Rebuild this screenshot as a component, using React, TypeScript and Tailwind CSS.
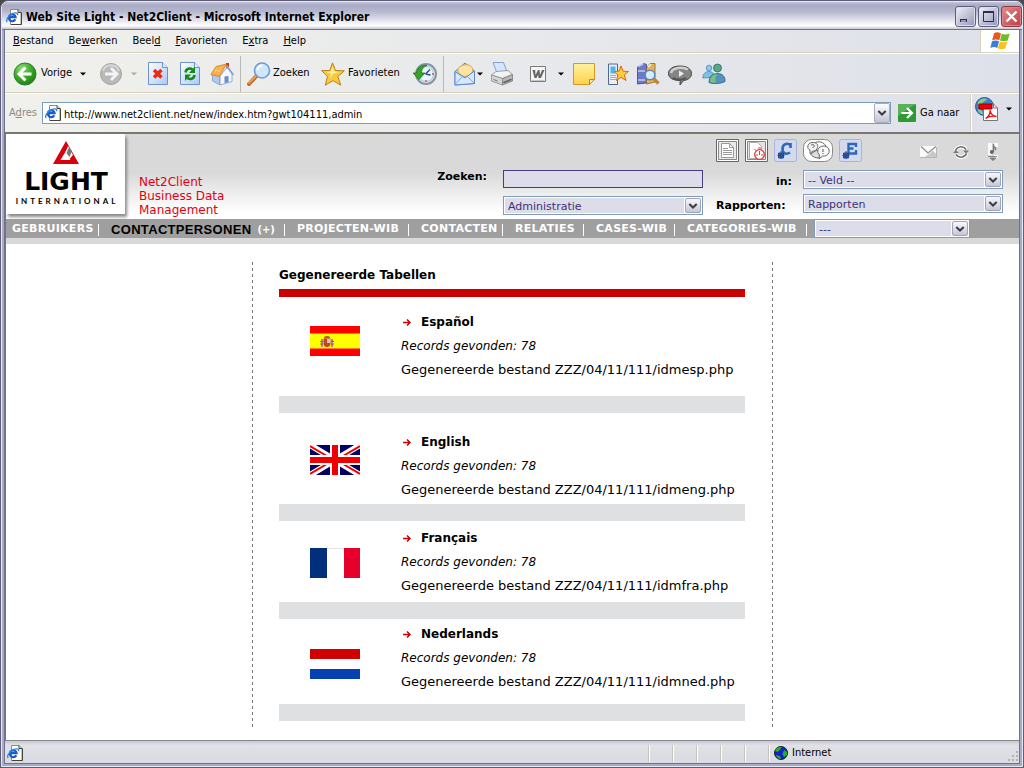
import type { ReactNode } from "react";

const ui = "font-['DejaVu_Sans_Condensed','DejaVu_Sans',sans-serif]";
const web = "font-['DejaVu_Sans',sans-serif]";

/* ---------- icons ---------- */

function IePage({ className }: { className?: string }) {
  return (
    <svg viewBox="0 0 16 16" className={className} aria-hidden="true">
      <path d="M4.500 .5h7.500l3 3v12H4.500z" fill="#fffef4" stroke="#8f8b78" />
      <path d="M12 .5v3h3M15.500 3.500v12H5" fill="none" stroke="#45423a" />
      <path d="M9.300 10.300A3.400 3.400 0 1 1 9.600 8.200H3.200" fill="none" stroke="#1b5cc8" strokeWidth="2.200" />
      <path d="M1.200 13C-1 10 5.500 2.500 11 4.200c1 .4.800 1.300.3 2" fill="none" stroke="#2f86e6" strokeWidth="1.300" />
    </svg>
  );
}

function Back() {
  return (
    <svg viewBox="0 0 24 24" className="h-6 w-6 shrink-0" aria-hidden="true">
      <defs>
        <radialGradient id="back" cx=".35" cy=".25" r=".9">
          <stop offset="0" stopColor="#8fdc7a" />
          <stop offset=".5" stopColor="#38a825" />
          <stop offset="1" stopColor="#17720f" />
        </radialGradient>
      </defs>
      <circle cx="12" cy="12" r="11" fill="url(#back)" stroke="#2c7d27" />
      <path d="M12.500 5.500 6 12l6.500 6.500M6.500 12H18.500" fill="none" stroke="#fff" strokeWidth="3" />
    </svg>
  );
}

function Forward() {
  return (
    <svg viewBox="0 0 24 24" className="h-6 w-6" aria-hidden="true">
      <circle cx="12" cy="12" r="10.500" fill="#b9b9b9" stroke="#a3a3a3" />
      <path d="M4 9a8.500 8.500 0 0 1 16 0" fill="none" stroke="#d8d8d8" strokeWidth="2" />
      <path d="M12 6l6 6-6 6M17.500 12H6" fill="none" stroke="#f4f4f4" strokeWidth="2.800" />
    </svg>
  );
}

function Caret({ color = "#000" }: { color?: string }) {
  return (
    <svg viewBox="0 0 6 4" className="h-1 w-1.5" aria-hidden="true">
      <path d="M0 .5h6L3 3.500z" fill={color} />
    </svg>
  );
}

function SheetBase({ id, children }: { id: string; children: ReactNode }) {
  return (
    <svg viewBox="0 0 20 24" className="h-6 w-5" aria-hidden="true">
      <defs>
        <linearGradient id={id} x2="1" y2="1">
          <stop offset="0" stopColor="#fff" />
          <stop offset="1" stopColor="#a9c8f7" />
        </linearGradient>
      </defs>
      <path d="M.5 .5h14l5 5v17H.500z" fill={`url(#${id})`} stroke="#6c92cf" />
      <path d="M14.500 .5v5h5" fill="#e6effd" stroke="#6c92cf" />
      {children}
    </svg>
  );
}

function Stop() {
  return (
    <SheetBase id="stop">
      <path d="M6 8l7.500 7.500M13.500 8 6 15.500" stroke="#ec2b0c" strokeWidth="3.400" />
    </SheetBase>
  );
}

function Refresh() {
  return (
    <SheetBase id="refresh">
      <path d="M5.500 10.500C6 6.500 10 5.500 12.500 7.500" fill="none" stroke="#148a14" strokeWidth="2.500" />
      <path d="M15 4.500v6.500H9z" fill="#148a14" />
      <path d="M14.500 13c-.5 4-4.500 5-7 3" fill="none" stroke="#148a14" strokeWidth="2.500" />
      <path d="M5 19v-6.500h6z" fill="#148a14" />
    </SheetBase>
  );
}

function Home() {
  return (
    <svg viewBox="0 0 24 24" className="h-6 w-6" aria-hidden="true">
      <path d="M16 1h3v6h-3z" fill="#d8361c" />
      <path d="M2.500 11.500 10 14v9l-7.500-4z" fill="#b3c8ea" stroke="#6884b5" strokeWidth=".6" />
      <path d="M10 14l7-8.500 5 6.500v7.500L10 23z" fill="#f4f8ff" stroke="#7f98c4" strokeWidth=".8" />
      <path d="M.8 12.500 6 4.500 16.500 2 9.500 14.500z" fill="#f8ae48" stroke="#cf7519" strokeWidth=".7" />
      <path d="M4 11l3-5M7 12l4.500-7M5 8.500l6 1" stroke="#fbd08a" strokeWidth=".7" />
      <path d="M16.500 3.500 23.500 13" stroke="#89a5d4" strokeWidth="1.800" />
      <path d="M14.500 14.500l4-.6v6.400l-4 .8z" fill="#6a8bcc" />
    </svg>
  );
}

function Search() {
  return (
    <svg viewBox="0 0 24 24" className="h-6 w-6 shrink-0" aria-hidden="true">
      <path d="M9 14.500 2 22" stroke="#c4692a" strokeWidth="4" strokeLinecap="round" />
      <path d="M9 14 2 21" stroke="#f3a868" strokeWidth="1.500" strokeLinecap="round" />
      <circle cx="15" cy="8.500" r="7.500" fill="#cfe7fb" stroke="#6f9bd6" strokeWidth="1.600" />
      <path d="M10.500 8a5 5 0 0 1 5-4.500" fill="none" stroke="#fff" strokeWidth="2" />
    </svg>
  );
}

function Star() {
  return (
    <svg viewBox="0 0 24 24" className="h-6 w-6 shrink-0" aria-hidden="true">
      <path
        d="M11.500 .8l3 7.700 8.900.3-6.600 5.700 3 8.700-7.800-4.600L4.300 23.200l2.200-8.900L.6 8.600l8.200-.1z"
        fill="#f9cb3c"
        stroke="#b9801b"
        strokeLinejoin="round"
      />
      <path d="M11.500 4.500l1.800 5 4.700.6-6 1.400-3 5.500 1-5.500-4.500-1.600 4.500-.6z" fill="#fff1a4" />
    </svg>
  );
}

function History() {
  return (
    <svg viewBox="0 0 24 24" className="h-6 w-6" aria-hidden="true">
      <circle cx="13" cy="12" r="10" fill="#d4e8f8" stroke="#8a949c" strokeWidth="2" />
      <circle cx="13" cy="12" r="7.500" fill="#e8f4ff" stroke="#a9c5dd" />
      <path d="M12.500 12 17 7.500M12.500 12l5 1" stroke="#33506f" strokeWidth="1.400" />
      <path d="M13 18v2M19 12h2" stroke="#e0521a" strokeWidth="1.500" />
      <path d="M0 11h3.500C4.500 5 9 2.500 14 3.500 10 5 8.500 7.500 8.500 11H12l-6 6.500z" fill="#35a629" stroke="#1b7514" strokeWidth=".8" />
    </svg>
  );
}

function Mail() {
  return (
    <svg viewBox="0 0 22 24" className="h-6 w-5.5" aria-hidden="true">
      <path d="M1 9.500 11 1l9.500 8v12.500L1 23z" fill="#b4d2f7" stroke="#5f86c6" />
      <path d="M4 6.500C8 1.500 17 1.500 18.500 6.500c1 5-3 7-7.500 8-4-1-8-4-7-8z" fill="#ffe5a4" stroke="#dba745" />
      <path d="M1 9.500 11 16l9.500-7v12.500L1 23z" fill="#d6e8ff" stroke="#5f86c6" />
      <path d="M1 22.500l7.500-8M20.500 21.500l-7-7" stroke="#7fa4dc" />
    </svg>
  );
}

function Printer() {
  return (
    <svg viewBox="0 0 24 24" className="h-6 w-6" aria-hidden="true">
      <path d="M3 .5h10.500l4 10.500H7z" fill="#d4e6ff" stroke="#6d8fca" strokeWidth=".8" />
      <path d="M1.500 13 6 9.500l12-1 4.500 4-10 4z" fill="#f2f2f2" stroke="#8a8a8a" strokeWidth=".8" />
      <path d="M1.500 13l11 3.500V23l-11-4z" fill="#d4d4d4" stroke="#8c8c8c" strokeWidth=".8" />
      <path d="M12.500 16.500l10-4v6.500l-10 4z" fill="#b5b5b5" stroke="#7c7c7c" strokeWidth=".8" />
      <path d="M13 20l8-3.200 1 1.200-8 3.200z" fill="#5c5c5c" />
      <path d="M3.500 17.500l4 1.500" stroke="#777" />
    </svg>
  );
}

function Word() {
  return (
    <svg viewBox="0 0 16 16" className="h-4 w-4" aria-hidden="true">
      <path d="M.5 .5h15v15H.5z" fill="#f5f5f5" stroke="#7a7a7a" />
      <path d="M2.500 4h2.700l.3 5L8 4h1.500l.5 5L12 4h2.500L11 12H8.500L8.200 8.500 6.500 12h-2z" fill="#666" />
      <path d="M1.500 14.500h13" stroke="#c4c4c4" />
    </svg>
  );
}

function Note() {
  return (
    <svg viewBox="0 0 22 22" className="h-5.5 w-5.5" aria-hidden="true">
      <defs>
        <linearGradient id="note" x2="0" y2="1">
          <stop offset="0" stopColor="#fff2a0" />
          <stop offset="1" stopColor="#ffd04d" />
        </linearGradient>
      </defs>
      <path d="M.5 .5h21v16l-5 5H.5z" fill="url(#note)" stroke="#d39a1e" />
      <path d="M16.500 21.500v-5h5z" fill="#ffe99a" stroke="#c88414" />
    </svg>
  );
}

function PhoneStar() {
  return (
    <svg viewBox="0 0 22 24" className="h-6 w-5.5" aria-hidden="true">
      <path d="M1.500 2h9v20.500h-9z" fill="#e9effa" stroke="#55658f" />
      <path d="M3.500 4.500h5v7h-5z" fill="#4db6ef" />
      <path d="M3.500 13.500h5M3.500 15.500h5M3.500 17.500h5" stroke="#55658f" strokeDasharray="1 1" />
      <path d="M14 4l2.200 5.200 5.300.3-4.200 3.500 1.700 5.500-5-3.200-4.500 3.200 1.400-5.500L7 9.500l5-.3z" fill="#ffcb36" stroke="#d2691a" />
    </svg>
  );
}

function Books() {
  return (
    <svg viewBox="0 0 24 24" className="h-6 w-6" aria-hidden="true">
      <path d="M1.500 5 8 1.500l2.500 1V21l-9 1z" fill="#6b7bc4" stroke="#38437f" strokeWidth=".8" />
      <path d="M2.500 4.500 7.500 1.500M2 9h7M2 18h7" stroke="#c3ccf2" strokeWidth="1.500" />
      <path d="M10.500 6 14 1.500h5V20l-8.500 2z" fill="#e2b45a" stroke="#8f6219" strokeWidth=".8" />
      <path d="M12 5l3-3" stroke="#fff7dd" strokeWidth="1.500" />
      <path d="M17 16l5.500 5.500" stroke="#c98330" strokeWidth="3.200" />
      <circle cx="14" cy="13" r="4.800" fill="#d3ecff" stroke="#5f87b8" strokeWidth="1.400" />
    </svg>
  );
}

function Speech() {
  return (
    <svg viewBox="0 0 24 24" className="h-6 w-6" aria-hidden="true">
      <path d="M12 4c7 0 11.500 3 11.500 7.500 0 4-3.500 6.500-8 7L12 23l.2-4.500C5 18.500.5 16 .5 11.500.5 7 5 4 12 4z" fill="#858585" stroke="#444" />
      <path d="M3 11C4 6 14 4 20 7.500" fill="none" stroke="#cfcfcf" strokeWidth="2.500" />
      <path d="M5 16c4 2 9 2 13 0" fill="none" stroke="#555" strokeWidth="2" />
      <path d="M11 8.500l5 3-5 3.500z" fill="#eee" />
    </svg>
  );
}

function People() {
  return (
    <svg viewBox="0 0 24 24" className="h-6 w-6" aria-hidden="true">
      <circle cx="7" cy="6" r="2.800" fill="#8cc8ee" stroke="#3f7fb3" strokeWidth=".7" />
      <path d="M.8 16c0-4 2.500-6.500 6-6.500s6 2.500 6 6z" fill="#7cc0e0" stroke="#3f7fb3" strokeWidth=".7" />
      <circle cx="15.500" cy="6" r="4" fill="#56a888" stroke="#1f5f66" strokeWidth=".7" />
      <path d="M7 20.500c0-6 3.500-9 8.500-9s8 3.500 7.500 8c-3 2-12 3-16 1z" fill="#5592c0" stroke="#1d4f79" strokeWidth=".7" />
      <path d="M8 20c0-5 3-8 7-8-2 3-2 6-1 9z" fill="#74c47c" />
    </svg>
  );
}

function Flag() {
  return (
    <svg viewBox="0 0 20 18" className="h-4.5 w-5" aria-hidden="true">
      <path d="M4 1.200c2.500-1.500 4.500-1 7 .2L9.300 8.300C7 7.200 5 7.200 2.200 8.300z" fill="#e8591d" />
      <path d="M11.700 1.800c2.500 1 4.800 1 8 0l-2 6.700c-2.500 1-5.200.8-7.700 0z" fill="#6fbb2c" />
      <path d="M2 9.200c2.500-1 4.700-1 7 0L7.300 16c-2.300-1.300-4.300-1.200-7 0z" fill="#3a7fd9" />
      <path d="M9.800 9.500c2.500 1 4.700 1 7.500 0l-2 7c-2.500 1-5 .8-7.500-.2z" fill="#fbc320" />
    </svg>
  );
}

function GoArrow() {
  return (
    <svg viewBox="0 0 18 18" className="h-4.5 w-4.5 shrink-0" aria-hidden="true">
      <rect width="18" height="18" rx="1" fill="#2d9a34" />
      <path d="M0 0h18L0 12z" fill="#56b35a" />
      <path d="M9 4l5 5-5 5M13.500 9H3.500" fill="none" stroke="#fff" strokeWidth="2.200" />
    </svg>
  );
}

function PdfGlobe() {
  return (
    <svg viewBox="0 0 24 24" className="h-6 w-6" aria-hidden="true">
      <circle cx="9.500" cy="9.500" r="9" fill="#3f82c9" stroke="#28588f" />
      <path d="M3 5c3-4 6-4 9-3-2 3-4 2-5 5-1 2-3 1-4 0zM3 12c2 0 5 2 5 5-3 0-5-2-5-5z" fill="#8fc98a" />
      <path d="M8.500 7h10l4 4v12.500h-14z" fill="#fff" stroke="#777" />
      <path d="M18.500 6.500v4.500h4" fill="none" stroke="#777" />
      <path d="M4 7h13v5H4z" fill="#e00" stroke="#900" />
      <path d="M10.500 21.500c3.500-2 5-5 4.500-8.500.5 4.500 2.500 6 6.500 6.500-4-.8-7.500 0-11 2z" fill="none" stroke="#e11" strokeWidth="1.300" />
    </svg>
  );
}

function Chevron() {
  return (
    <svg viewBox="0 0 9 6" className="h-1.5 w-2.5" aria-hidden="true">
      <path d="M.8 1 4.500 4.500 8.200 1" fill="none" stroke="#3c3c44" strokeWidth="2" />
    </svg>
  );
}

/* ---------- window chrome ---------- */

function Underlined({ text, at }: { text: string; at: number }) {
  return (
    <>
      {text.slice(0, at)}
      <span className="underline">{text[at]}</span>
      {text.slice(at + 1)}
    </>
  );
}

function TitleBar() {
  const button =
    "flex h-[21px] w-[21px] items-center justify-center rounded-[3px] border border-[#5d5f80] bg-linear-to-br from-[#f2f2f8] to-[#9496b5] shadow-[inset_0_0_0_1px_#dcdce8]";
  return (
    <header className="flex h-7 items-center gap-1 border-b border-[#73738f] bg-[linear-gradient(#c4c5d8,#a9abc6_12%,#b5b7ce_35%,#f4f4f8_80%,#fff_88%,#c3c3d2)] pt-0.5 pl-1">
      <IePage className="h-4 w-4" />
      <h1 className="flex-1 truncate text-[12px] font-bold">Web Site Light - Net2Client - Microsoft Internet Explorer</h1>
      <div className="flex gap-0.5">
        <button aria-label="Minimaliseren" className={button}>
          <svg viewBox="0 0 13 13" className="h-[13px] w-[13px]">
            <path d="M1 9h7v3H1z" fill="#2c2c4c" />
            <path d="M2 10.500h5v1H2z" fill="#fff" />
          </svg>
        </button>
        <button aria-label="Maximaliseren" className={button}>
          <svg viewBox="0 0 13 13" className="h-[13px] w-[13px]">
            <path d="M1.500 1.500h10v10h-10z" fill="none" stroke="#2c2c4c" />
            <path d="M1 2h11" stroke="#2c2c4c" strokeWidth="2" />
          </svg>
        </button>
        <button
          aria-label="Sluiten"
          className="flex h-[21px] w-[21px] items-center justify-center rounded-[3px] border border-[#8c3a48] bg-linear-to-br from-[#e88a8a] to-[#bd3a45] shadow-[inset_0_0_0_1px_#dd8286]"
        >
          <svg viewBox="0 0 13 13" className="h-[13px] w-[13px]">
            <path d="M1.500 1.500l10 10M11.500 1.500l-10 10" stroke="#fff" strokeWidth="2.400" />
          </svg>
        </button>
      </div>
    </header>
  );
}

const menus = [
  { text: "Bestand", at: 0 },
  { text: "Bewerken", at: 2 },
  { text: "Beeld", at: 4 },
  { text: "Favorieten", at: 0 },
  { text: "Extra", at: 1 },
  { text: "Help", at: 0 },
];

function MenuBar() {
  return (
    <nav className="flex h-6 border-b border-white">
      <div className="flex flex-1 items-center gap-[15px] border-b border-[#d8d2bd] pl-2">
        {menus.map((m) => (
          <button key={m.text}>
            <Underlined {...m} />
          </button>
        ))}
      </div>
      <div className="flex w-[39px] items-center justify-center border-b border-l border-[#d8d2bd] bg-white">
        <Flag />
      </div>
    </nav>
  );
}

function Tool({ label, className, children }: { label: string; className: string; children: ReactNode }) {
  return (
    <button aria-label={label} className={`flex h-8 shrink-0 items-center ${className}`}>
      {children}
    </button>
  );
}

function ToolBar() {
  return (
    <div className="flex h-10 items-center border-b border-white pl-2 shadow-[inset_0_-1px_#d8d2bd]">
      <Tool label="Vorige" className="w-[62px] gap-1">
        <Back />
        Vorige
      </Tool>
      <Tool label="Vorige pagina's" className="w-4 justify-center">
        <Caret />
      </Tool>
      <Tool label="Volgende" className="w-10 justify-center">
        <Forward />
      </Tool>
      <Tool label="Volgende pagina's" className="w-[11px]">
        <Caret color="#aaa" />
      </Tool>
      <Tool label="Stoppen" className="w-8 justify-center">
        <Stop />
      </Tool>
      <Tool label="Vernieuwen" className="w-8 justify-center">
        <Refresh />
      </Tool>
      <Tool label="Startpagina" className="w-8 justify-center">
        <Home />
      </Tool>
      <div className="mx-0.5 h-9 w-px bg-[#b9b9b9]" />
      <Tool label="Zoeken" className="w-[74px] gap-0.5 pl-1">
        <Search />
        Zoeken
      </Tool>
      <Tool label="Favorieten" className="w-[88px] gap-[3px] pl-1">
        <Star />
        Favorieten
      </Tool>
      <Tool label="Geschiedenis" className="w-9 justify-end pr-1">
        <History />
      </Tool>
      <div className="mx-0.5 h-9 w-px bg-[#b9b9b9]" />
      <Tool label="E-mail" className="w-[30px] justify-end">
        <Mail />
      </Tool>
      <Tool label="E-mailopties" className="w-2 justify-center">
        <Caret />
      </Tool>
      <Tool label="Afdrukken" className="w-9 justify-center">
        <Printer />
      </Tool>
      <Tool label="Bewerken met Word" className="w-9 justify-center">
        <Word />
      </Tool>
      <Tool label="Bewerken met" className="w-[10px] justify-center">
        <Caret />
      </Tool>
      <Tool label="Notitie" className="w-9 justify-center">
        <Note />
      </Tool>
      <Tool label="Mobiele favorieten" className="w-8 justify-center">
        <PhoneStar />
      </Tool>
      <Tool label="Onderzoek" className="w-7 justify-center">
        <Books />
      </Tool>
      <Tool label="Discussie" className="w-9 justify-center">
        <Speech />
      </Tool>
      <Tool label="Messenger" className="w-8 justify-center">
        <People />
      </Tool>
    </div>
  );
}

function AddressBar() {
  return (
    <form className="flex h-[38px] items-stretch" onSubmit={(e) => e.preventDefault()}>
      <div className="flex flex-1 items-center pl-1">
        <label htmlFor="url" className="w-[33px] text-[#8a8a86]">
          <Underlined text="Adres" at={1} />
        </label>
        <div className="flex h-[22px] flex-1 items-center border border-[#7f9db9] bg-white pl-0.5">
          <IePage className="h-4 w-4" />
          <input
            id="url"
            defaultValue="http://www.net2client.net/new/index.htm?gwt104111,admin"
            className="h-full min-w-0 flex-1 pt-0.5 pl-[3px] outline-none"
          />
          <button
            type="button"
            aria-label="Adreslijst"
            className="flex h-5 w-4 items-center justify-center rounded-[2px] border border-[#a9abbd] bg-linear-to-b from-white to-[#c3c4d4]"
          >
            <Chevron />
          </button>
        </div>
        <button className="flex w-[79px] items-center gap-1 pl-[7px]">
          <GoArrow />
          Ga naar
        </button>
      </div>
      <div className="flex w-[49px] items-start gap-[7px] border-l border-[#d8d2bd] pt-[3px] pl-1 shadow-[inset_1px_0_#fff]">
        <button type="button" aria-label="PDF">
          <PdfGlobe />
        </button>
        <button type="button" aria-label="PDF-opties" className="flex h-6 items-center">
          <Caret />
        </button>
      </div>
    </form>
  );
}

/* ---------- site header ---------- */

function Logo() {
  return (
    <a href="#home" aria-label="Light International" className="block h-20 w-[119px] bg-white shadow-[2px_3px_3px_#8a8a8a]">
      <svg viewBox="0 0 119 80" className="h-20 w-[119px]">
        <path d="M60 7 73 30H47z" fill="#d9000d" />
        <path d="M60 17l4.500 9H54.500z" fill="#fff" />
        <path d="M62 12l5 9-3.500 4-4-7z" fill="#fff" />
        <path d="M63 13.500l3 3.500-2.500 6-3-4z" fill="#777" />
        <text x="60" y="56" textAnchor="middle" fontFamily="DejaVu Sans" fontWeight="bold" fontSize="25">
          LIGHT
        </text>
        <text x="61" y="70" textAnchor="middle" fontFamily="Lato" fontSize="8" fontWeight="bold" letterSpacing="3">
          INTERNATIONAL
        </text>
      </svg>
    </a>
  );
}

function Select({ id, label, options, className }: { id: string; label?: string; options: string[]; className: string }) {
  return (
    <div className={`flex border border-[#7f9db9] bg-white p-px ${className}`}>
      <select id={id} aria-label={label} className="min-w-0 flex-1 appearance-none bg-[#dddce9] pt-px pl-[3px] text-[#3c327b] outline-none">
        {options.map((o) => (
          <option key={o}>{o}</option>
        ))}
      </select>
      <span className="pointer-events-none ml-px flex w-4 items-center justify-center rounded-[2px] border border-[#a2a4b8] bg-linear-to-b from-[#f8f8fb] to-[#c6c7d6]">
        <Chevron />
      </span>
    </div>
  );
}

function IconLink({ label, children }: { label: string; children: ReactNode }) {
  return (
    <a href="#tool" aria-label={label}>
      {children}
    </a>
  );
}

function HeaderIcons() {
  return (
    <div className="flex h-6 items-center gap-1.5">
      <IconLink label="Document">
        <svg viewBox="0 0 23 23" className="h-[23px] w-[23px]">
          <path d="M.5 .5h22v22H.5z" fill="#fff" stroke="#666" />
          <path d="M2.500 2.500h18v18h-18z" fill="#e9e9e9" stroke="#888" />
          <path d="M5.500 4.500h8l4 4v10h-12z" fill="#fff" stroke="#999" />
          <path d="M13.500 4.500v4h4M7 9.500h5M7 11.500h9M7 13.500h9M7 15.500h9" fill="none" stroke="#999" />
        </svg>
      </IconLink>
      <IconLink label="Planning">
        <svg viewBox="0 0 23 23" className="h-[23px] w-[23px]">
          <path d="M.5 .5h22v22H.5z" fill="#fff" stroke="#666" />
          <path d="M2.500 2.500h18v18h-18z" fill="#e3e3e3" stroke="#888" />
          <path d="M4.500 3.500h8l4 4v12h-12z" fill="#fff" stroke="#aaa" />
          <circle cx="14.500" cy="15.500" r="4.800" fill="#fff" stroke="#d93a3a" strokeWidth="1.300" />
          <path d="M14.500 12v4M13 9h3M9.500 10l2 2M17 15v2M12 15v2" fill="none" stroke="#d93a3a" />
        </svg>
      </IconLink>
      <IconLink label="Contacten">
        <svg viewBox="0 0 23 23" className="h-[23px] w-[23px]">
          <rect x=".5" y=".5" width="22" height="22" rx="2" fill="#d3daf0" stroke="#a6b3da" />
          <path d="M16.500 9V4M16.500 6.500C14 3.500 8.500 4.500 8.500 10s4.500 5.500 7.500 3.500" fill="none" stroke="#2c6ab8" strokeWidth="2.600" />
          <path d="M4.500 14h5v5h-5zM7 12v8M3.500 16.500h7" fill="#2c55a8" stroke="#2c4a8a" />
        </svg>
      </IconLink>
      <IconLink label="Vragen">
        <svg viewBox="0 0 30 23" className="h-[23px] w-[30px]">
          <rect x=".5" y=".5" width="29" height="22" rx="8" fill="#fff" stroke="#888" />
          <path d="M7 11C3.500 10 4 4 9 3.500c5-.5 7 3 5 6.500-1.500 2-3 2-4 2l-3 2.500z" fill="#f2f2f2" stroke="#666" />
          <path d="M12.500 3.500C17 1.500 23 4 23 9" fill="none" stroke="#666" />
          <path d="M7.500 15c3 4 8 5 11 3L14 11z" fill="#ddd" stroke="#666" />
          <path d="M20 7c4.500 0 7 3 6 6.500-1 3-4 4-6.500 3.500L16 20l.5-4C13 13 15 7.500 20 7z" fill="#f8f8f8" stroke="#666" />
          <path d="M8 6.500c1-1.500 4-1 3 1L9.500 9M20 10v3M20 14v1" fill="none" stroke="#555" />
        </svg>
      </IconLink>
      <IconLink label="Evenementen">
        <svg viewBox="0 0 23 23" className="h-[23px] w-[23px]">
          <rect x=".5" y=".5" width="22" height="22" rx="2" fill="#d3daf0" stroke="#a6b3da" />
          <path d="M17 8V5H9.500v9.500H17V11M9.500 9.500h5" fill="none" stroke="#2c6ab8" strokeWidth="2.400" />
          <path d="M4.500 14h5v5h-5zM7 12v8M3.500 16.500h7" fill="#2c55a8" stroke="#2c4a8a" />
        </svg>
      </IconLink>
      <div className="mt-1 mr-0.5 ml-auto flex items-center gap-4">
        <IconLink label="Bericht">
          <svg viewBox="0 0 17 12" className="h-3 w-[17px]">
            <path d="M0 0h17v12H0z" fill="#fafafa" />
            <path d="M9 8l4-3.500L17 9v3H3z" fill="#c9c9c9" />
            <path d="M1 .5l7 6.500 8-6.500" fill="none" stroke="#8d8d8d" strokeWidth="1.200" />
            <path d="M0 11.500h16.500V1" fill="none" stroke="#b5b5b5" />
          </svg>
        </IconLink>
        <IconLink label="Vernieuwen">
          <svg viewBox="0 0 16 16" className="h-4 w-4">
            <path d="M2.500 6.500a6 6 0 0 1 10.500-1M13.500 9.500a6 6 0 0 1-10.500 1" fill="none" stroke="#fff" strokeWidth="3.500" />
            <path d="M2.500 6.500a6 6 0 0 1 10.500-1M13.500 9.500a6 6 0 0 1-10.500 1" fill="none" stroke="#666" strokeWidth="1.500" />
            <path d="M10 6.500h6L13 9.500zM0 9h6L3 6z" fill="#777" />
          </svg>
        </IconLink>
        <IconLink label="Afmelden">
          <svg viewBox="0 0 16 18" className="h-4.5 w-4">
            <path d="M3 0h4v12H3zM9 0h4v4H9zM9 12h4v3H9z" fill="#fafafa" />
            <path d="M8.500 1v8M8 2.500c2 1.500 3 2 2.500 4.500" fill="none" stroke="#777" strokeWidth="1.300" />
            <circle cx="6.800" cy="9" r="2" fill="#666" />
            <path d="M3 13.500h9M5 15h6l-3 2.500z" fill="#777" stroke="#888" />
          </svg>
        </IconLink>
      </div>
    </div>
  );
}

function SiteHeader() {
  return (
    <header className={`flex h-[85px] bg-[linear-gradient(#d9d9d9_45%,#fff_92%)] pr-4 text-[11px] ${web}`}>
      <Logo />
      <p className="mt-[41px] ml-3.5 flex-1 text-[12px] leading-[14px] text-[#e30010]">
        Net2Client
        <br />
        Business Data
        <br />
        Management
      </p>
      <div className="flex flex-col items-end gap-2 pt-9">
        <div className="flex items-start gap-4">
          <label htmlFor="zoeken" className="leading-[14px] font-bold">
            Zoeken:
          </label>
          <input id="zoeken" className="h-[18px] w-[200px] border border-[#463d82] bg-[#dddce9] px-1 outline-none" />
        </div>
        <Select id="afdeling" label="Afdeling" options={["Administratie"]} className="h-[19px] w-[200px]" />
      </div>
      <div className="ml-[13px] flex w-[287px] flex-col pt-1">
        <HeaderIcons />
        <div className="mt-2 flex items-center justify-end gap-[11px]">
          <label htmlFor="veld" className="pt-1 leading-none font-bold">
            in:
          </label>
          <Select id="veld" options={["-- Veld --"]} className="h-[19px] w-[200px]" />
        </div>
        <div className="mt-[5px] flex items-center justify-between">
          <label htmlFor="rapporten" className="pt-1 leading-none font-bold">
            Rapporten:
          </label>
          <Select id="rapporten" options={["Rapporten"]} className="h-[19px] w-[200px]" />
        </div>
      </div>
    </header>
  );
}

const tabs = [
  { label: "GEBRUIKERS", width: "w-[94px]" },
  { label: "CONTACTPERSONEN", width: "w-[186px]", current: true },
  { label: "PROJECTEN-WIB", width: "w-[124px]" },
  { label: "CONTACTEN", width: "w-[94px]" },
  { label: "RELATIES", width: "w-[81px]" },
  { label: "CASES-WIB", width: "w-[91px]" },
  { label: "CATEGORIES-WIB", width: "w-[132px]" },
];

function SiteNav() {
  return (
    <nav className={`flex h-[25px] items-start border-b-6 border-[#d9d9d9] bg-[#9f9f9f] text-[11px] font-bold text-white ${web}`}>
      {tabs.map((tab, i) => (
        <div
          key={tab.label}
          className={`flex h-[19px] shrink-0 items-center pt-0.5 whitespace-nowrap ${tab.width} ${i === 0 ? "pl-1.5" : "pl-[11px]"}`}
        >
          <a
            href="#tab"
            className={tab.current ? "font-['Liberation_Sans',sans-serif] text-[13px] tracking-wide text-black" : "tracking-wide"}
          >
            {tab.label}
          </a>
          {tab.current && (
            <a href="#nieuw" className="ml-1.5 text-[10px]">
              (+)
            </a>
          )}
          <span className="mr-px ml-auto h-3 w-px bg-white" />
        </div>
      ))}
      <Select id="meer" label="Meer" options={["---"]} className="ml-1.5 h-[19px] w-[156px] font-normal" />
    </nav>
  );
}

/* ---------- generated tables ---------- */

function SpainFlag() {
  return (
    <svg viewBox="0 0 50 30" className="h-[30px] w-[50px]">
      <path d="M0 0h50v30H0z" fill="#f00" />
      <path d="M0 7.500h50v15H0z" fill="#ff0" />
      <path d="M11 13h2v8h-2zM21 13h2v8h-2z" fill="#b88a6a" />
      <path d="M13.500 12.500h7V18c0 4-7 4-7 0z" fill="#c1432a" />
      <path d="M17 12.500h3.500V17H17z" fill="#d9c6c6" />
      <path d="M14 11c1-1.500 5-1.500 6 0v1.500h-6z" fill="#b5651d" />
      <path d="M10 18h3M21 18h3M10 15.500h3M21 15.500h3" stroke="#a55" />
    </svg>
  );
}

function UkFlag() {
  return (
    <svg viewBox="0 0 50 30" className="h-[30px] w-[50px]">
      <path d="M0 0h50v30H0z" fill="#006" />
      <path d="M0 0l50 30M50 0 0 30" stroke="#fff" strokeWidth="6" />
      <path d="M0 1l22 13M28 16l22 13M50 1 28 14M22 16 0 29" stroke="#f00000" strokeWidth="2" />
      <path d="M25 0v30M0 15h50" stroke="#fff" strokeWidth="10" />
      <path d="M25 0v30M0 15h50" stroke="#f00000" strokeWidth="6" />
    </svg>
  );
}

function FranceFlag() {
  return (
    <svg viewBox="0 0 50 30" className="h-[30px] w-[50px]">
      <path d="M0 0h50v30H0z" fill="#fff" />
      <path d="M17 .5h17" stroke="#e4e4e4" />
      <path d="M0 0h17v30H0z" fill="#002f7b" />
      <path d="M34 0h16v30H34z" fill="#e4002b" />
    </svg>
  );
}

function NetherlandsFlag() {
  return (
    <svg viewBox="0 0 50 30" className="h-[30px] w-[50px]">
      <path d="M0 0h50v30H0z" fill="#fff" />
      <path d="M0 0h50v10H0z" fill="#d00000" />
      <path d="M0 20h50v10H0z" fill="#0740b0" />
    </svg>
  );
}

const tables = [
  { name: "Español", file: "idmesp.php", flag: <SpainFlag />, height: "h-[99px]", textPad: "pt-[13px]", flagPad: "pt-[29px]" },
  { name: "English", file: "idmeng.php", flag: <UkFlag />, height: "h-[91px]", textPad: "pt-[17px]", flagPad: "pt-8" },
  { name: "Français", file: "idmfra.php", flag: <FranceFlag />, height: "h-[81px]", textPad: "pt-[5px]", flagPad: "pt-[27px]" },
  { name: "Nederlands", file: "idmned.php", flag: <NetherlandsFlag />, height: "h-[85px]", textPad: "pt-[3px]", flagPad: "pt-[30px]" },
];

function GeneratedTables() {
  const rule = "w-px shrink-0 bg-[repeating-linear-gradient(#777_0_3px,transparent_3px_6px)]";
  return (
    <main className={`flex flex-1 justify-center pt-[18px] pb-[13px] text-[12px] ${web}`}>
      <div className="flex w-[521px]">
        <div className={rule} />
        <div className="flex-1 pr-[27px] pb-1.5 pl-[26px]">
          <h2 className="h-[27px] leading-[26px] font-bold">Gegenereerde Tabellen</h2>
          <div className="h-2 bg-[#cc0000]" />
          <ul>
            {tables.map((t) => (
              <li key={t.name}>
                <div className={`flex ${t.height}`}>
                  <div className={`w-[122px] pl-[31px] ${t.flagPad}`}>{t.flag}</div>
                  <div className={`leading-6 ${t.textPad}`}>
                    <a href="#tabel" className="flex items-center gap-2.5 pl-0.5 font-bold">
                      <svg viewBox="0 0 8 7" className="h-[7px] w-2" aria-hidden="true">
                        <path d="M0 3.500h7M4 .5l3 3-3 3" fill="none" stroke="#cc0000" strokeWidth="1.500" />
                      </svg>
                      {t.name}
                    </a>
                    <p className="italic">Records gevonden: 78</p>
                    <p className="text-[13px] leading-6">Gegenereerde bestand ZZZ/04/11/111/{t.file}</p>
                  </div>
                </div>
                <div className="h-[17px] bg-[#dfe0e2]" />
              </li>
            ))}
          </ul>
        </div>
        <div className={rule} />
      </div>
    </main>
  );
}

function StatusBar() {
  return (
    <footer className="flex h-[23px] items-center border-t border-[#85858f] bg-linear-to-b from-[#c9c9d0] via-[#e0e1e6] via-20% to-[#dadbe3] pt-0.5 pl-0.5">
      <IePage className="h-4 w-4" />
      <div className="flex-1" />
      {[0, 1, 2, 3, 4].map((n) => (
        <div key={n} className="h-[17px] w-6 border-l border-[#c6c3b8] shadow-[inset_1px_0_#fff]" />
      ))}
      <div className="flex h-[17px] w-[251px] items-center gap-1 border-l border-[#c6c3b8] pl-[5px] shadow-[inset_1px_0_#fff]">
        <svg viewBox="0 0 14 14" className="h-3.5 w-3.5" aria-hidden="true">
          <circle cx="7" cy="7" r="6.500" fill="#1420c8" stroke="#222" />
          <path d="M1 5c1-3 4-4.500 7-4L6 4 3.500 6zM10 4l3 2v3l-3 2-1.500-3zM2 9l4 1 1 3c-3 0-4.500-2-5-4z" fill="#22b322" />
        </svg>
        Internet
        <svg viewBox="0 0 12 12" className="ml-auto h-3 w-3 self-end" aria-hidden="true">
          <path d="M9 1h2v2H9zM5 5h2v2H5zM9 5h2v2H9zM1 9h2v2H1zM5 9h2v2H5zM9 9h2v2H9z" fill="#b5b2a6" />
        </svg>
      </div>
    </footer>
  );
}

export default function App() {
  return (
    <div className={`min-h-screen bg-[#4a4a4a] text-[11px] text-black ${ui}`}>
      <div className="flex min-h-screen flex-col rounded-t-lg border border-[#5f5c7a] bg-[#5f5c7a]">
        <div className="flex flex-1 flex-col overflow-hidden rounded-t-[7px] border border-[#e9e9f3] bg-[#a9abc6]">
          <TitleBar />
          <div className="mx-0.5 mb-0.5 flex flex-1 flex-col border-x border-b border-[#6f7190]">
            <div className="bg-linear-to-r from-[#f0f1ec] to-[#dfe1ea]">
              <MenuBar />
              <ToolBar />
              <AddressBar />
            </div>
            <div className="flex flex-1 flex-col border-t-2 border-l border-[#77776f] bg-white">
              <SiteHeader />
              <SiteNav />
              <GeneratedTables />
            </div>
            <StatusBar />
          </div>
        </div>
      </div>
    </div>
  );
}
